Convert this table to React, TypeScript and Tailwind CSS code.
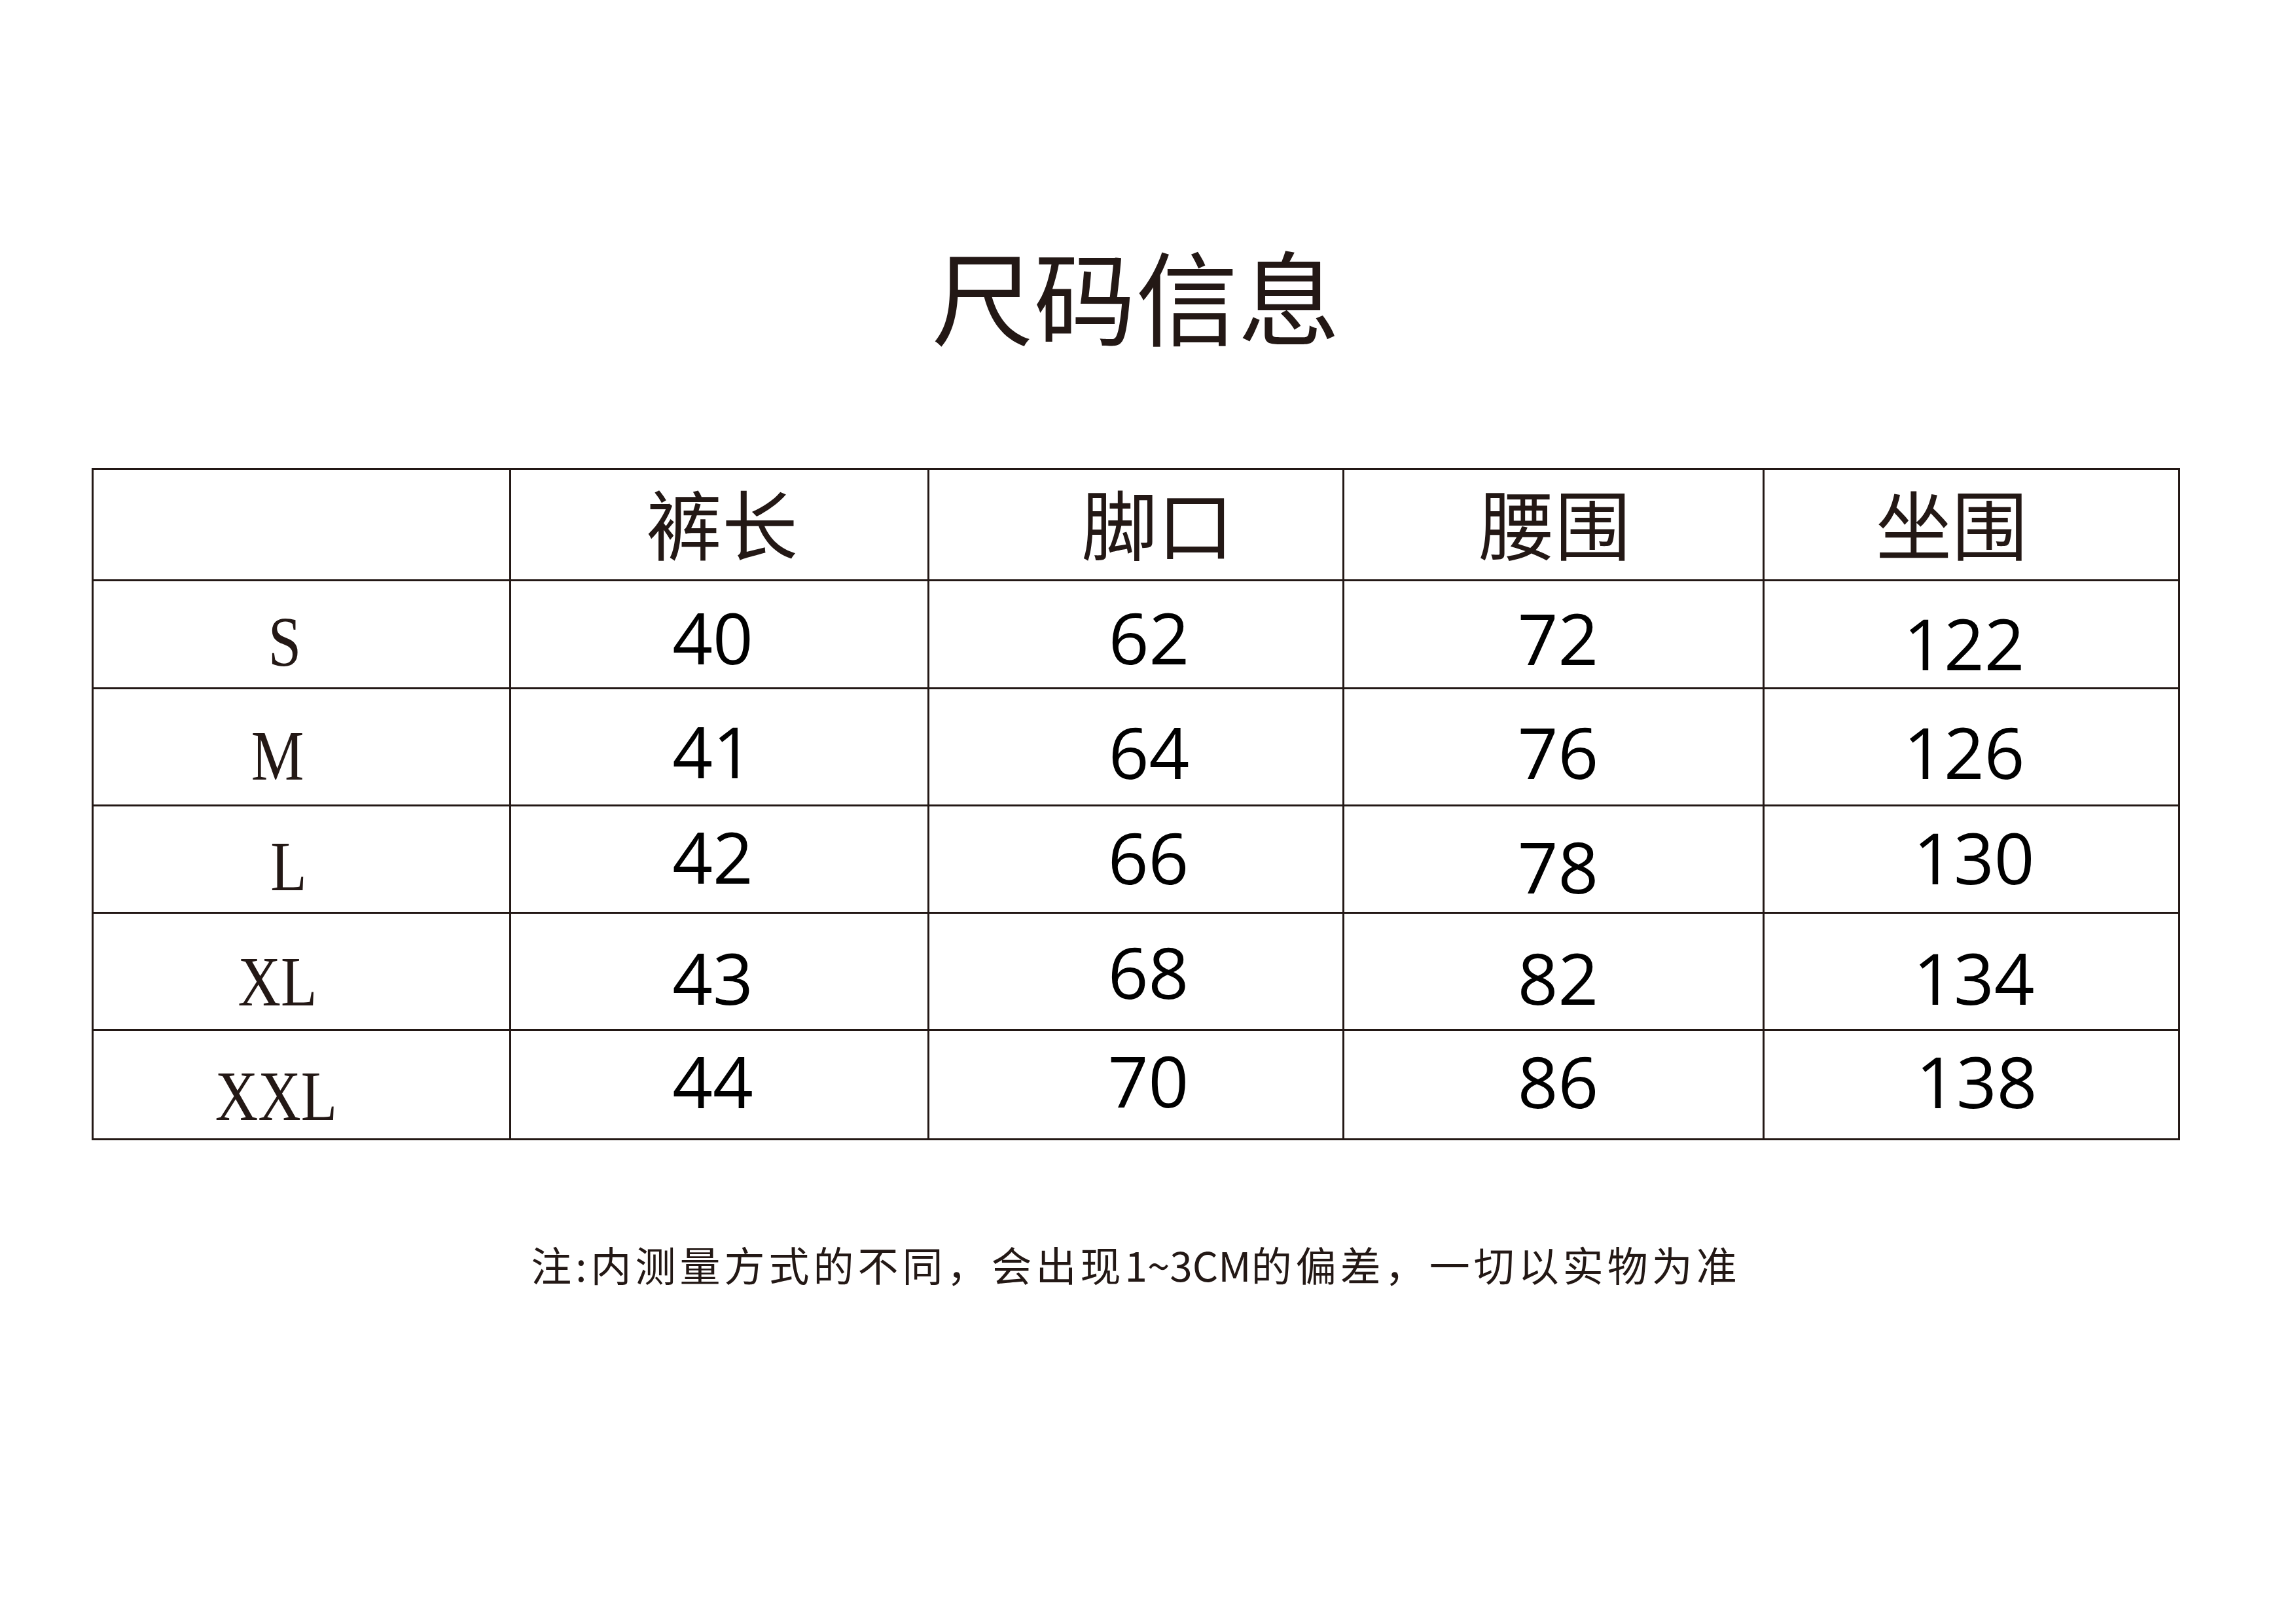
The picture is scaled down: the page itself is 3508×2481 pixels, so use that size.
import React from "react";

type Cell = { v: string; cls: string };
type Row = { label: string; lcls: string; h: string; cells: Cell[] };

const headers: { t: string; cls: string; w: string }[] = [
  { t: "裤长", cls: "translate-x-[4px] -translate-y-[6px]", w: "w-[639px]" },
  { t: "脚口", cls: "translate-x-[33px] -translate-y-[6px]", w: "w-[634px]" },
  { t: "腰围", cls: "translate-x-[2px] -translate-y-[6px]", w: "w-[642px]" },
  { t: "坐围", cls: "-translate-x-[30px] -translate-y-[6px]", w: "w-[635px]" },
];

const widths = ["w-[639px]", "w-[634px]", "w-[642px]", "w-[635px]"];

const rows: Row[] = [
  {
    label: "S",
    lcls: "-translate-x-[25px] translate-y-[12px]",
    h: "h-[165px]",
    cells: [
      { v: "40", cls: "-translate-x-[10px] translate-y-[5px]" },
      { v: "62", cls: "translate-x-[20px] translate-y-[5px]" },
      { v: "72", cls: "translate-x-[7px] translate-y-[6px]" },
      { v: "122", cls: "-translate-x-[11px] translate-y-[14px]" },
    ],
  },
  {
    label: "M",
    lcls: "-translate-x-[36px] translate-y-[14px]",
    h: "h-[179px]",
    cells: [
      { v: "41", cls: "-translate-x-[10px] translate-y-[7px]" },
      { v: "64", cls: "translate-x-[20px] translate-y-[8px]" },
      { v: "76", cls: "translate-x-[7px] translate-y-[8px]" },
      { v: "126", cls: "-translate-x-[11px] translate-y-[8px]" },
    ],
  },
  {
    label: "L",
    lcls: "-translate-x-[20px] translate-y-[11px]",
    h: "h-[164px]",
    cells: [
      { v: "42", cls: "-translate-x-[10px] -translate-y-[4px]" },
      { v: "66", cls: "translate-x-[19px] -translate-y-[3px]" },
      { v: "78", cls: "translate-x-[7px] translate-y-[11px]" },
      { v: "130", cls: "translate-x-[4px] -translate-y-[3px]" },
    ],
  },
  {
    label: "XL",
    lcls: "-translate-x-[37px] translate-y-[16px]",
    h: "h-[179px]",
    cells: [
      { v: "43", cls: "-translate-x-[10px] translate-y-[10px]" },
      { v: "68", cls: "translate-x-[19px] translate-y-[1px]" },
      { v: "82", cls: "translate-x-[7px] translate-y-[10px]" },
      { v: "134", cls: "translate-x-[4px] translate-y-[10px]" },
    ],
  },
  {
    label: "XXL",
    lcls: "-translate-x-[39px] translate-y-[18px]",
    h: "h-[167px]",
    cells: [
      { v: "44", cls: "-translate-x-[10px] -translate-y-[5px]" },
      { v: "70", cls: "translate-x-[19px] -translate-y-[6px]" },
      { v: "86", cls: "translate-x-[7px] -translate-y-[5px]" },
      { v: "138", cls: "translate-x-[8px] -translate-y-[5px]" },
    ],
  },
];

const cjk = "font-['Noto_Sans_CJK_SC',sans-serif]";

export default function App() {
  return (
    <div className="w-[3508px] h-[2481px] bg-white overflow-hidden">
      <div className="ml-[140px] w-[3191px] flex flex-col">
        <div
          className={`mt-[370px] h-[156px] flex justify-center text-[156px] leading-none text-[#231815] ${cjk}`}
        >
          尺码信息
        </div>

        <div className="mt-[189px] border-[3px] border-[#231815] flex flex-col">
          <div className="h-[167px] flex">
            <div className="w-[635px]" />
            {headers.map((h) => (
              <div
                key={h.t}
                className={`${h.w} border-l-[3px] border-[#231815] flex items-center justify-center`}
              >
                <span
                  className={`${h.cls} text-[116px] leading-none text-[#231815] ${cjk}`}
                >
                  {h.t}
                </span>
              </div>
            ))}
          </div>
          {rows.map((r) => (
            <div key={r.label} className={`${r.h} border-t-[3px] border-[#231815] flex`}>
              <div className="w-[635px] flex items-center justify-center">
                <span
                  className={`${r.lcls} inline-block text-[108px] leading-none text-[#231815] font-['Liberation_Serif',serif]`}
                >
                  <span className="inline-block scale-x-[0.84]">{r.label}</span>
                </span>
              </div>
              {r.cells.map((c, i) => (
                <div
                  key={i}
                  className={`${widths[i]} border-l-[3px] border-[#231815] flex items-center justify-center`}
                >
                  <span
                    className={`${c.cls} text-[108px] leading-none text-black font-['Open_Sans',sans-serif]`}
                  >
                    {c.v}
                  </span>
                </div>
              ))}
            </div>
          ))}
        </div>

        <div
          className={`mt-[158px] h-[62px] flex justify-center text-[62px] leading-none tracking-[6px] text-[#231815] ${cjk}`}
        >
          <span>
            注:内测量方式的不同，会出现
            <span className="tracking-[0px]">1~3CM</span>
            的偏差，一切以实物为准
          </span>
        </div>
      </div>
    </div>
  );
}
